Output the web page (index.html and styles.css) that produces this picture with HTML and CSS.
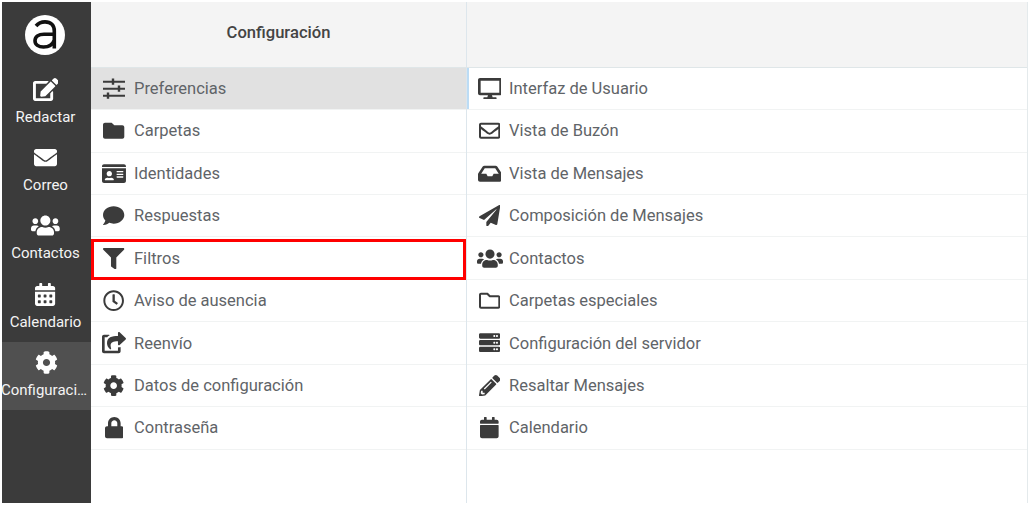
FILE: index.html
```html
<!DOCTYPE html>
<html lang="es">
<head>
<meta charset="utf-8">
<title>Configuración</title>
<link rel="stylesheet" href="styles.css">
</head>
<body>
<div class="app">
  <nav class="sidebar">
    <div class="logo">
      <svg viewBox="0 0 40 40"><circle cx="20" cy="20" r="20" fill="#fff"/><path d="M11 11C13.500 8 17 6.900 20 6.900 26 6.900 29.300 10.500 29.300 16V33.500M29.300 19.200H19C13.500 19.200 10 21.700 10 25.800 10 29.700 13.500 32 18.500 32 23.500 32 27.800 29.500 29.300 25" fill="none" stroke="#111" stroke-width="3.600"/></svg>
    </div>
    <a class="nav-item">
      <svg class="nav-icon" viewBox="0 0 576 512"><path d="M402.6 83.2l90.2 90.2c3.8 3.8 3.8 10 0 13.800L274.400 405.600l-92.800 10.300c-12.400 1.400-22.900-9.100-21.500-21.500l10.300-92.800L388.800 83.200c3.800-3.800 10-3.800 13.800 0zm162-22.900l-48.800-48.800c-15.200-15.200-39.900-15.200-55.200 0l-35.400 35.400c-3.800 3.800-3.800 10 0 13.800l90.200 90.200c3.800 3.800 10 3.800 13.800 0l35.400-35.400c15.200-15.300 15.200-40 0-55.200zM384 346.200V448H64V128h229.800c3.200 0 6.200-1.300 8.500-3.500l40-40c7.600-7.600 2.200-20.500-8.500-20.500H48C21.500 64 0 85.500 0 112v352c0 26.500 21.500 48 48 48h352c26.500 0 48-21.500 48-48V306.200c0-10.700-12.900-16-20.500-8.500l-40 40c-2.200 2.300-3.500 5.300-3.500 8.500z"/></svg>
      <span class="nav-label">Redactar</span>
    </a>
    <a class="nav-item">
      <svg class="nav-icon" viewBox="0 0 512 512"><path d="M502.3 190.800c3.900-3.100 9.700-.2 9.700 4.700V400c0 26.500-21.500 48-48 48H48c-26.500 0-48-21.500-48-48V195.600c0-5 5.700-7.800 9.700-4.700 22.400 17.400 52.100 39.500 154.100 113.600 21.100 15.400 56.700 47.800 92.200 47.600 35.700.3 72-32.800 92.300-47.600 102-74.100 131.600-96.300 154-113.700zM256 320c23.200.4 56.600-29.200 73.400-41.400 132.700-96.300 142.800-104.700 173.400-128.700 5.800-4.500 9.200-11.500 9.200-18.900v-19c0-26.500-21.500-48-48-48H48C21.500 64 0 85.500 0 112v19c0 7.400 3.400 14.300 9.200 18.900 30.600 23.900 40.700 32.400 173.400 128.700 16.800 12.200 50.200 41.800 73.400 41.400z"/></svg>
      <span class="nav-label">Correo</span>
    </a>
    <a class="nav-item">
      <svg class="nav-icon" viewBox="0 0 640 512"><path d="M96 224c35.300 0 64-28.700 64-64s-28.700-64-64-64-64 28.700-64 64 28.700 64 64 64zm448 0c35.300 0 64-28.700 64-64s-28.700-64-64-64-64 28.700-64 64 28.700 64 64 64zm32 32h-64c-17.600 0-33.500 7.100-45.100 18.600 40.300 22.100 68.900 62 75.100 109.400h66c17.700 0 32-14.300 32-32v-32c0-35.300-28.700-64-64-64zm-256 0c61.900 0 112-50.100 112-112S381.900 32 320 32 208 82.100 208 144s50.100 112 112 112zm76.800 32h-8.300c-20.800 10-43.900 16-68.500 16s-47.600-6-68.500-16h-8.300C179.600 288 128 339.600 128 403.200V432c0 26.500 21.500 48 48 48h288c26.500 0 48-21.500 48-48v-28.800c0-63.600-51.600-115.200-115.200-115.200zm-223.700-13.400C161.500 263.100 145.600 256 128 256H64c-35.300 0-64 28.700-64 64v32c0 17.700 14.300 32 32 32h65.900c6.300-47.400 34.900-87.300 75.200-109.400z"/></svg>
      <span class="nav-label">Contactos</span>
    </a>
    <a class="nav-item">
      <svg class="nav-icon" viewBox="0 0 448 512"><path d="M0 464c0 26.500 21.500 48 48 48h352c26.500 0 48-21.500 48-48V192H0v272zm320-196c0-6.600 5.400-12 12-12h40c6.600 0 12 5.400 12 12v40c0 6.600-5.400 12-12 12h-40c-6.600 0-12-5.400-12-12v-40zm0 128c0-6.600 5.400-12 12-12h40c6.600 0 12 5.400 12 12v40c0 6.600-5.400 12-12 12h-40c-6.600 0-12-5.400-12-12v-40zM192 268c0-6.600 5.400-12 12-12h40c6.600 0 12 5.400 12 12v40c0 6.600-5.400 12-12 12h-40c-6.600 0-12-5.400-12-12v-40zm0 128c0-6.600 5.400-12 12-12h40c6.600 0 12 5.400 12 12v40c0 6.600-5.400 12-12 12h-40c-6.600 0-12-5.400-12-12v-40zM64 268c0-6.600 5.400-12 12-12h40c6.600 0 12 5.400 12 12v40c0 6.600-5.400 12-12 12H76c-6.600 0-12-5.400-12-12v-40zm0 128c0-6.600 5.400-12 12-12h40c6.600 0 12 5.400 12 12v40c0 6.600-5.400 12-12 12H76c-6.600 0-12-5.400-12-12v-40zM400 64h-48V16c0-8.800-7.200-16-16-16h-32c-8.800 0-16 7.200-16 16v48H160V16c0-8.800-7.200-16-16-16h-32c-8.800 0-16 7.200-16 16v48H48C21.500 64 0 85.500 0 112v48h448v-48c0-26.500-21.500-48-48-48z"/></svg>
      <span class="nav-label">Calendario</span>
    </a>
    <a class="nav-item nav-item-active">
      <svg class="nav-icon" viewBox="0 0 512 512"><path d="M487.400 315.700l-42.600-24.600c4.300-23.200 4.300-47 0-70.200l42.600-24.600c4.900-2.800 7.100-8.600 5.500-14-11.100-35.600-30-67.800-54.700-94.600-3.800-4.100-10-5.100-14.800-2.300L380.800 110c-17.900-15.400-38.500-27.300-60.800-35.100V25.800c0-5.600-3.900-10.500-9.400-11.700-36.700-8.200-74.300-7.800-109.200 0-5.500 1.200-9.400 6.100-9.400 11.700V75c-22.200 7.900-42.800 19.800-60.800 35.100L88.700 85.500c-4.900-2.800-11-1.900-14.800 2.300-24.700 26.700-43.600 58.900-54.700 94.600-1.700 5.400.6 11.200 5.500 14L67.300 221c-4.300 23.200-4.300 47 0 70.200l-42.600 24.600c-4.900 2.800-7.100 8.600-5.500 14 11.100 35.600 30 67.800 54.700 94.600 3.800 4.100 10 5.100 14.800 2.300l42.600-24.600c17.900 15.400 38.500 27.300 60.800 35.100v49.200c0 5.600 3.900 10.500 9.400 11.700 36.700 8.200 74.300 7.800 109.200 0 5.500-1.200 9.400-6.100 9.400-11.700v-49.200c22.200-7.900 42.800-19.800 60.800-35.100l42.600 24.600c4.900 2.800 11 1.900 14.800-2.300 24.700-26.700 43.600-58.900 54.700-94.600 1.500-5.500-.7-11.300-5.600-14.100zM256 336c-44.100 0-80-35.900-80-80s35.900-80 80-80 80 35.900 80 80-35.900 80-80 80z"/></svg>
      <span class="nav-label">Configuración</span>
    </a>
  </nav>

  <section class="col-sections">
    <header class="col-header">Configuración</header>
    <ul class="list">
      <li class="row row-selected">
        <span class="ico"><svg viewBox="0 0 22 21.300"><path d="M0 3.650h22M0 10.650h22M0 17.650h22" stroke="#3b3b3b" stroke-width="2" fill="none"/><path d="M8.800.6h2.400v6.100H8.800zM14.800 7.600h2.400v6.100h-2.400zM3.800 14.600h2.400v6.100H3.800z"/></svg></span>
        <span>Preferencias</span>
      </li>
      <li class="row">
        <span class="ico"><svg viewBox="0 0 512 512"><path d="M464 128H272l-64-64H48C21.490 64 0 85.490 0 112v288c0 26.510 21.490 48 48 48h416c26.510 0 48-21.490 48-48V176c0-26.510-21.490-48-48-48z"/></svg></span>
        <span>Carpetas</span>
      </li>
      <li class="row">
        <span class="ico"><svg viewBox="0 0 576 512"><path d="M528 32H48C21.500 32 0 53.500 0 80v16h576V80c0-26.500-21.500-48-48-48zM0 432c0 26.500 21.500 48 48 48h480c26.500 0 48-21.500 48-48V128H0v304zm352-232c0-4.400 3.600-8 8-8h144c4.400 0 8 3.600 8 8v16c0 4.400-3.600 8-8 8H360c-4.400 0-8-3.600-8-8v-16zm0 64c0-4.400 3.600-8 8-8h144c4.400 0 8 3.600 8 8v16c0 4.400-3.600 8-8 8H360c-4.400 0-8-3.600-8-8v-16zm0 64c0-4.400 3.600-8 8-8h144c4.400 0 8 3.600 8 8v16c0 4.400-3.600 8-8 8H360c-4.400 0-8-3.600-8-8v-16zM176 192c35.300 0 64 28.700 64 64s-28.700 64-64 64-64-28.700-64-64 28.700-64 64-64zM67.100 396.200C75.500 370.500 99.600 352 128 352h8.200c12.300 5.100 25.700 8 39.800 8s27.600-2.900 39.800-8h8.200c28.400 0 52.500 18.500 60.900 44.200 3.200 9.900-5.200 19.800-15.600 19.800H82.700c-10.400 0-18.800-10-15.600-19.800z"/></svg></span>
        <span>Identidades</span>
      </li>
      <li class="row">
        <span class="ico"><svg viewBox="0 0 512 512"><path d="M256 32C114.600 32 0 125.100 0 240c0 49.600 21.400 95 57 130.700C44.500 421.100 2.700 466 2.200 466.500c-2.200 2.300-2.800 5.700-1.500 8.700S4.800 480 8 480c66.300 0 116-31.800 140.600-51.400 32.700 12.300 69 19.400 107.400 19.400 141.400 0 256-93.100 256-208S397.400 32 256 32z"/></svg></span>
        <span>Respuestas</span>
      </li>
      <li class="row">
        <span class="ico"><svg viewBox="0 0 512 512"><path d="M487.976 0H24.028C2.710 0-8.047 25.866 7.058 40.971L192 225.941V432c0 7.831 3.821 15.170 10.237 19.662l80 55.980C298.020 518.690 320 507.493 320 487.980V225.941l184.947-184.970C520.021 25.896 509.338 0 487.976 0z"/></svg></span>
        <span>Filtros</span>
        <span class="callout"></span>
      </li>
      <li class="row">
        <span class="ico"><svg viewBox="0 0 512 512"><path d="M256 8C119 8 8 119 8 256s111 248 248 248 248-111 248-248S393 8 256 8zm0 448c-110.500 0-200-89.500-200-200S145.500 56 256 56s200 89.500 200 200-89.500 200-200 200zm61.800-104.400l-84.900-61.700c-3.100-2.300-4.900-5.900-4.900-9.700V116c0-6.600 5.400-12 12-12h32c6.600 0 12 5.400 12 12v141.700l66.800 48.600c5.400 3.900 6.500 11.400 2.600 16.800L334.600 349c-3.900 5.300-11.400 6.500-16.800 2.600z"/></svg></span>
        <span>Aviso de ausencia</span>
      </li>
      <li class="row">
        <span class="ico"><svg viewBox="0 0 576 512"><path d="M568.482 177.448L424.479 313.433C409.300 327.768 384 317.140 384 295.985v-71.963c-144.575.970-205.566 35.113-164.775 171.353 4.483 14.973-12.846 26.567-25.006 17.330C155.252 383.105 120 326.488 120 269.339c0-143.937 117.599-172.500 264-173.312V24.012c0-21.174 25.317-31.768 40.479-17.448l144.003 135.988c10.020 9.463 10.028 25.425 0 34.896zM384 379.128V448H64V128h50.916a11.990 11.990 0 0 0 8.648-3.693c14.953-15.568 32.237-27.890 51.014-37.676C186.708 80.313 182.394 64 168.640 64H48C21.490 64 0 85.490 0 112v352c0 26.510 21.490 48 48 48h352c26.510 0 48-21.490 48-48v-88.806c0-8.288-8.197-14.066-16.011-11.302a71.830 71.830 0 0 1-34.189 3.377c-7.270-1.046-13.800 4.514-13.800 11.859z"/></svg></span>
        <span>Reenvío</span>
      </li>
      <li class="row">
        <span class="ico"><svg viewBox="0 0 512 512"><path d="M487.400 315.700l-42.600-24.600c4.300-23.200 4.300-47 0-70.200l42.600-24.600c4.900-2.800 7.100-8.600 5.500-14-11.100-35.600-30-67.800-54.700-94.600-3.800-4.100-10-5.100-14.800-2.300L380.800 110c-17.900-15.400-38.500-27.300-60.800-35.100V25.800c0-5.600-3.900-10.500-9.400-11.700-36.700-8.200-74.300-7.800-109.200 0-5.500 1.200-9.400 6.100-9.400 11.700V75c-22.200 7.900-42.800 19.800-60.800 35.100L88.700 85.500c-4.900-2.800-11-1.900-14.800 2.300-24.700 26.700-43.600 58.900-54.700 94.600-1.700 5.400.6 11.200 5.500 14L67.300 221c-4.300 23.200-4.300 47 0 70.200l-42.600 24.600c-4.900 2.800-7.100 8.600-5.500 14 11.100 35.600 30 67.800 54.700 94.600 3.800 4.100 10 5.100 14.800 2.300l42.600-24.600c17.900 15.400 38.500 27.300 60.800 35.100v49.200c0 5.600 3.900 10.500 9.400 11.700 36.700 8.200 74.300 7.800 109.200 0 5.500-1.200 9.400-6.100 9.400-11.700v-49.200c22.200-7.900 42.800-19.800 60.800-35.100l42.600 24.600c4.900 2.800 11 1.900 14.800-2.300 24.700-26.700 43.600-58.900 54.700-94.600 1.500-5.500-.7-11.300-5.600-14.100zM256 336c-44.100 0-80-35.900-80-80s35.900-80 80-80 80 35.900 80 80-35.900 80-80 80z"/></svg></span>
        <span>Datos de configuración</span>
      </li>
      <li class="row">
        <span class="ico"><svg viewBox="0 0 448 512"><path d="M400 224h-24v-72C376 68.200 307.800 0 224 0S72 68.200 72 152v72H48c-26.500 0-48 21.500-48 48v192c0 26.500 21.500 48 48 48h352c26.500 0 48-21.500 48-48V272c0-26.500-21.500-48-48-48zm-104 0H152v-72c0-39.700 32.300-72 72-72s72 32.300 72 72v72z"/></svg></span>
        <span>Contraseña</span>
      </li>
    </ul>
  </section>

  <section class="col-detail">
    <header class="col-header"></header>
    <ul class="list">
      <li class="row row-active">
        <span class="ico"><svg viewBox="0 0 576 512"><path d="M528 0H48C21.500 0 0 21.500 0 48v320c0 26.500 21.500 48 48 48h192l-16 48h-72c-13.300 0-24 10.700-24 24s10.700 24 24 24h272c13.300 0 24-10.700 24-24s-10.700-24-24-24h-72l-16-48h192c26.500 0 48-21.500 48-48V48c0-26.500-21.500-48-48-48zm-16 352H64V64h448v288z"/></svg></span>
        <span>Interfaz de Usuario</span>
      </li>
      <li class="row">
        <span class="ico"><svg viewBox="0 0 512 512"><path d="M464 64H48C21.490 64 0 85.490 0 112v288c0 26.510 21.490 48 48 48h416c26.510 0 48-21.490 48-48V112c0-26.510-21.490-48-48-48zm0 48v40.805c-22.422 18.259-58.168 46.651-134.587 106.490-16.841 13.247-50.201 45.072-73.413 44.701-23.208.375-56.579-31.459-73.413-44.701C106.180 199.465 70.425 171.067 48 152.805V112h416zM48 400V214.398c22.914 18.251 55.409 43.862 104.938 82.646 21.857 17.205 60.134 55.186 103.062 54.955 42.717.231 80.509-37.199 103.053-54.947 49.528-38.783 82.032-64.401 104.947-82.653V400H48z"/></svg></span>
        <span>Vista de Buzón</span>
      </li>
      <li class="row">
        <span class="ico"><svg viewBox="0 0 576 512"><path d="M567.938 243.908L462.250 85.374A48.003 48.003 0 0 0 422.311 64H153.689a48 48 0 0 0-39.938 21.374L8.062 243.908A47.994 47.994 0 0 0 0 270.533V400c0 26.510 21.490 48 48 48h480c26.510 0 48-21.490 48-48V270.533a47.994 47.994 0 0 0-8.062-26.625zM162.252 128h251.497l85.333 128H376l-32 64H232l-32-64H76.918l85.334-128z"/></svg></span>
        <span>Vista de Mensajes</span>
      </li>
      <li class="row">
        <span class="ico"><svg viewBox="0 0 512 512"><path d="M476 3.200L12.500 270.600c-18.100 10.400-15.800 35.600 2.200 43.200L121 358.400l287.300-253.200c5.500-4.900 13.300 2.600 8.600 8.300L176 407v80.500c0 23.600 28.500 32.900 42.500 15.800L282 426l124.600 52.200c14.200 6 30.400-2.900 33-18.200l72-432C515 7.800 493.300-6.800 476 3.200z"/></svg></span>
        <span>Composición de Mensajes</span>
      </li>
      <li class="row">
        <span class="ico"><svg viewBox="0 0 640 512"><path d="M96 224c35.300 0 64-28.700 64-64s-28.700-64-64-64-64 28.700-64 64 28.700 64 64 64zm448 0c35.300 0 64-28.700 64-64s-28.700-64-64-64-64 28.700-64 64 28.700 64 64 64zm32 32h-64c-17.600 0-33.500 7.100-45.100 18.600 40.300 22.100 68.900 62 75.100 109.400h66c17.700 0 32-14.300 32-32v-32c0-35.300-28.700-64-64-64zm-256 0c61.900 0 112-50.100 112-112S381.900 32 320 32 208 82.100 208 144s50.100 112 112 112zm76.800 32h-8.300c-20.800 10-43.900 16-68.500 16s-47.600-6-68.500-16h-8.300C179.600 288 128 339.600 128 403.200V432c0 26.500 21.500 48 48 48h288c26.500 0 48-21.500 48-48v-28.800c0-63.600-51.600-115.200-115.200-115.200zm-223.700-13.400C161.500 263.100 145.600 256 128 256H64c-35.300 0-64 28.700-64 64v32c0 17.700 14.300 32 32 32h65.900c6.300-47.400 34.900-87.300 75.200-109.400z"/></svg></span>
        <span>Contactos</span>
      </li>
      <li class="row">
        <span class="ico"><svg viewBox="0 0 512 512"><path d="M464 128H272l-54.630-54.630c-6-6-14.140-9.370-22.630-9.370H48C21.490 64 0 85.490 0 112v288c0 26.510 21.490 48 48 48h416c26.510 0 48-21.490 48-48V176c0-26.510-21.490-48-48-48zm0 272H48V112h140.120l54.630 54.630c6 6 14.140 9.370 22.630 9.370H464v224z"/></svg></span>
        <span>Carpetas especiales</span>
      </li>
      <li class="row">
        <span class="ico"><svg viewBox="0 0 512 512"><path d="M480 160H32c-17.673 0-32-14.327-32-32V64c0-17.673 14.327-32 32-32h448c17.673 0 32 14.327 32 32v64c0 17.673-14.327 32-32 32zm-48-88c-13.255 0-24 10.745-24 24s10.745 24 24 24 24-10.745 24-24-10.745-24-24-24zm-64 0c-13.255 0-24 10.745-24 24s10.745 24 24 24 24-10.745 24-24-10.745-24-24-24zm112 248H32c-17.673 0-32-14.327-32-32v-64c0-17.673 14.327-32 32-32h448c17.673 0 32 14.327 32 32v64c0 17.673-14.327 32-32 32zm-48-88c-13.255 0-24 10.745-24 24s10.745 24 24 24 24-10.745 24-24-10.745-24-24-24zm-64 0c-13.255 0-24 10.745-24 24s10.745 24 24 24 24-10.745 24-24-10.745-24-24-24zm112 248H32c-17.673 0-32-14.327-32-32v-64c0-17.673 14.327-32 32-32h448c17.673 0 32 14.327 32 32v64c0 17.673-14.327 32-32 32zm-48-88c-13.255 0-24 10.745-24 24s10.745 24 24 24 24-10.745 24-24-10.745-24-24-24zm-64 0c-13.255 0-24 10.745-24 24s10.745 24 24 24 24-10.745 24-24-10.745-24-24-24z"/></svg></span>
        <span>Configuración del servidor</span>
      </li>
      <li class="row">
        <span class="ico"><svg viewBox="0 0 512 512"><path d="M497.900 142.100l-46.100 46.100c-4.700 4.700-12.300 4.700-17 0l-111-111c-4.700-4.700-4.700-12.300 0-17l46.100-46.100c18.700-18.700 49.100-18.700 67.900 0l60.100 60.100c18.800 18.700 18.800 49.100 0 67.900zM284.200 99.800L21.600 362.400.4 483.900c-2.900 16.400 11.400 30.600 27.800 27.800l121.500-21.300 262.600-262.600c4.700-4.700 4.700-12.300 0-17l-111-111c-4.800-4.700-12.400-4.700-17.100 0zM124.100 339.900c-5.500-5.500-5.500-14.300 0-19.800l154-154c5.500-5.500 14.300-5.500 19.800 0s5.500 14.300 0 19.800l-154 154c-5.500 5.500-14.300 5.500-19.800 0zM88 424h48v36.300l-64.500 11.300-31.100-31.100L51.700 376H88v48z"/></svg></span>
        <span>Resaltar Mensajes</span>
      </li>
      <li class="row">
        <span class="ico"><svg viewBox="0 0 448 512"><path d="M12 192h424c6.600 0 12 5.400 12 12v260c0 26.500-21.500 48-48 48H48c-26.500 0-48-21.500-48-48V204c0-6.600 5.400-12 12-12zm436-44v-36c0-26.500-21.500-48-48-48h-48V12c0-6.600-5.400-12-12-12h-40c-6.600 0-12 5.400-12 12v52H160V12c0-6.600-5.400-12-12-12h-40c-6.600 0-12 5.400-12 12v52H48C21.500 64 0 85.500 0 112v36c0 6.600 5.400 12 12 12h424c6.600 0 12-5.400 12-12z"/></svg></span>
        <span>Calendario</span>
      </li>
    </ul>
  </section>
</div>
</body>
</html>
```
FILE: styles.css
```css
* { box-sizing: border-box; }

html, body {
  margin: 0;
  padding: 0;
  background: #fff;
}

body {
  font-family: Roboto, "Liberation Sans", sans-serif;
  width: 1030px;
  height: 507px;
  overflow: hidden;
  padding: 2px 2px 4px 2px;
}

.app {
  display: grid;
  grid-template-columns: 89px 375px 1fr;
  height: 501px;
  border-right: 1px solid #e4eaec;
}

.sidebar {
  background: #3b3b3b;
  display: flex;
  flex-direction: column;
  color: #fff;
}

.logo {
  height: 66px;
  flex: none;
  display: flex;
  align-items: center;
  justify-content: center;
  padding: 0 3px 0 0;
}

.logo svg {
  width: 40px;
  height: 40px;
}

.nav-item {
  height: 68.4px;
  flex: none;
  display: flex;
  flex-direction: column;
  align-items: center;
  padding: 9.5px 2px 0 0;
  color: #fff;
}

.nav-item-active {
  background: #505050;
  padding-right: 0;
}

.nav-item-active .nav-label {
  margin-left: -2px;
  flex: none;
}

.nav-icon {
  height: 23px;
  fill: #fff;
  flex: none;
}

.nav-label {
  display: block;
  width: 100%;
  margin-top: 6px;
  font-size: 15px;
  line-height: 20px;
  text-align: center;
  white-space: nowrap;
  overflow: hidden;
  text-overflow: ellipsis;
  color: #f4f4f4;
}

.col-sections,
.col-detail {
  display: flex;
  flex-direction: column;
  min-width: 0;
}

.col-detail {
  border-left: 1px solid #dde6ec;
}

.col-header {
  height: 65.7px;
  flex: none;
  background: #f4f4f4;
  border-bottom: 1px solid #dfe6e8;
  display: flex;
  align-items: center;
  justify-content: center;
  font-size: 16.6px;
  font-weight: 500;
  color: #444;
  padding-bottom: 3px;
}

.list {
  list-style: none;
  margin: 0;
  padding: 0;
}

.row {
  position: relative;
  height: 42.45px;
  display: flex;
  align-items: center;
  gap: 7px;
  padding-left: 10px;
  border-bottom: 1px solid #f1f3f3;
  font-size: 16.5px;
  color: #5f6468;
}

.col-detail .row {
  padding-left: 9.5px;
  gap: 6.5px;
}

.row-selected {
  background: #e1e1e1;
}

.row-active {
  box-shadow: inset 2px 0 0 #bcdcf5;
}

.ico {
  width: 26px;
  height: 22px;
  flex: none;
  display: flex;
  align-items: center;
  justify-content: center;
}

.ico svg {
  height: 21.3px;
  fill: #3b3b3b;
}

.callout {
  position: absolute;
  left: 0;
  right: 0;
  top: 1.5px;
  bottom: -1px;
  border: 3px solid #f00;
  pointer-events: none;
}
```
